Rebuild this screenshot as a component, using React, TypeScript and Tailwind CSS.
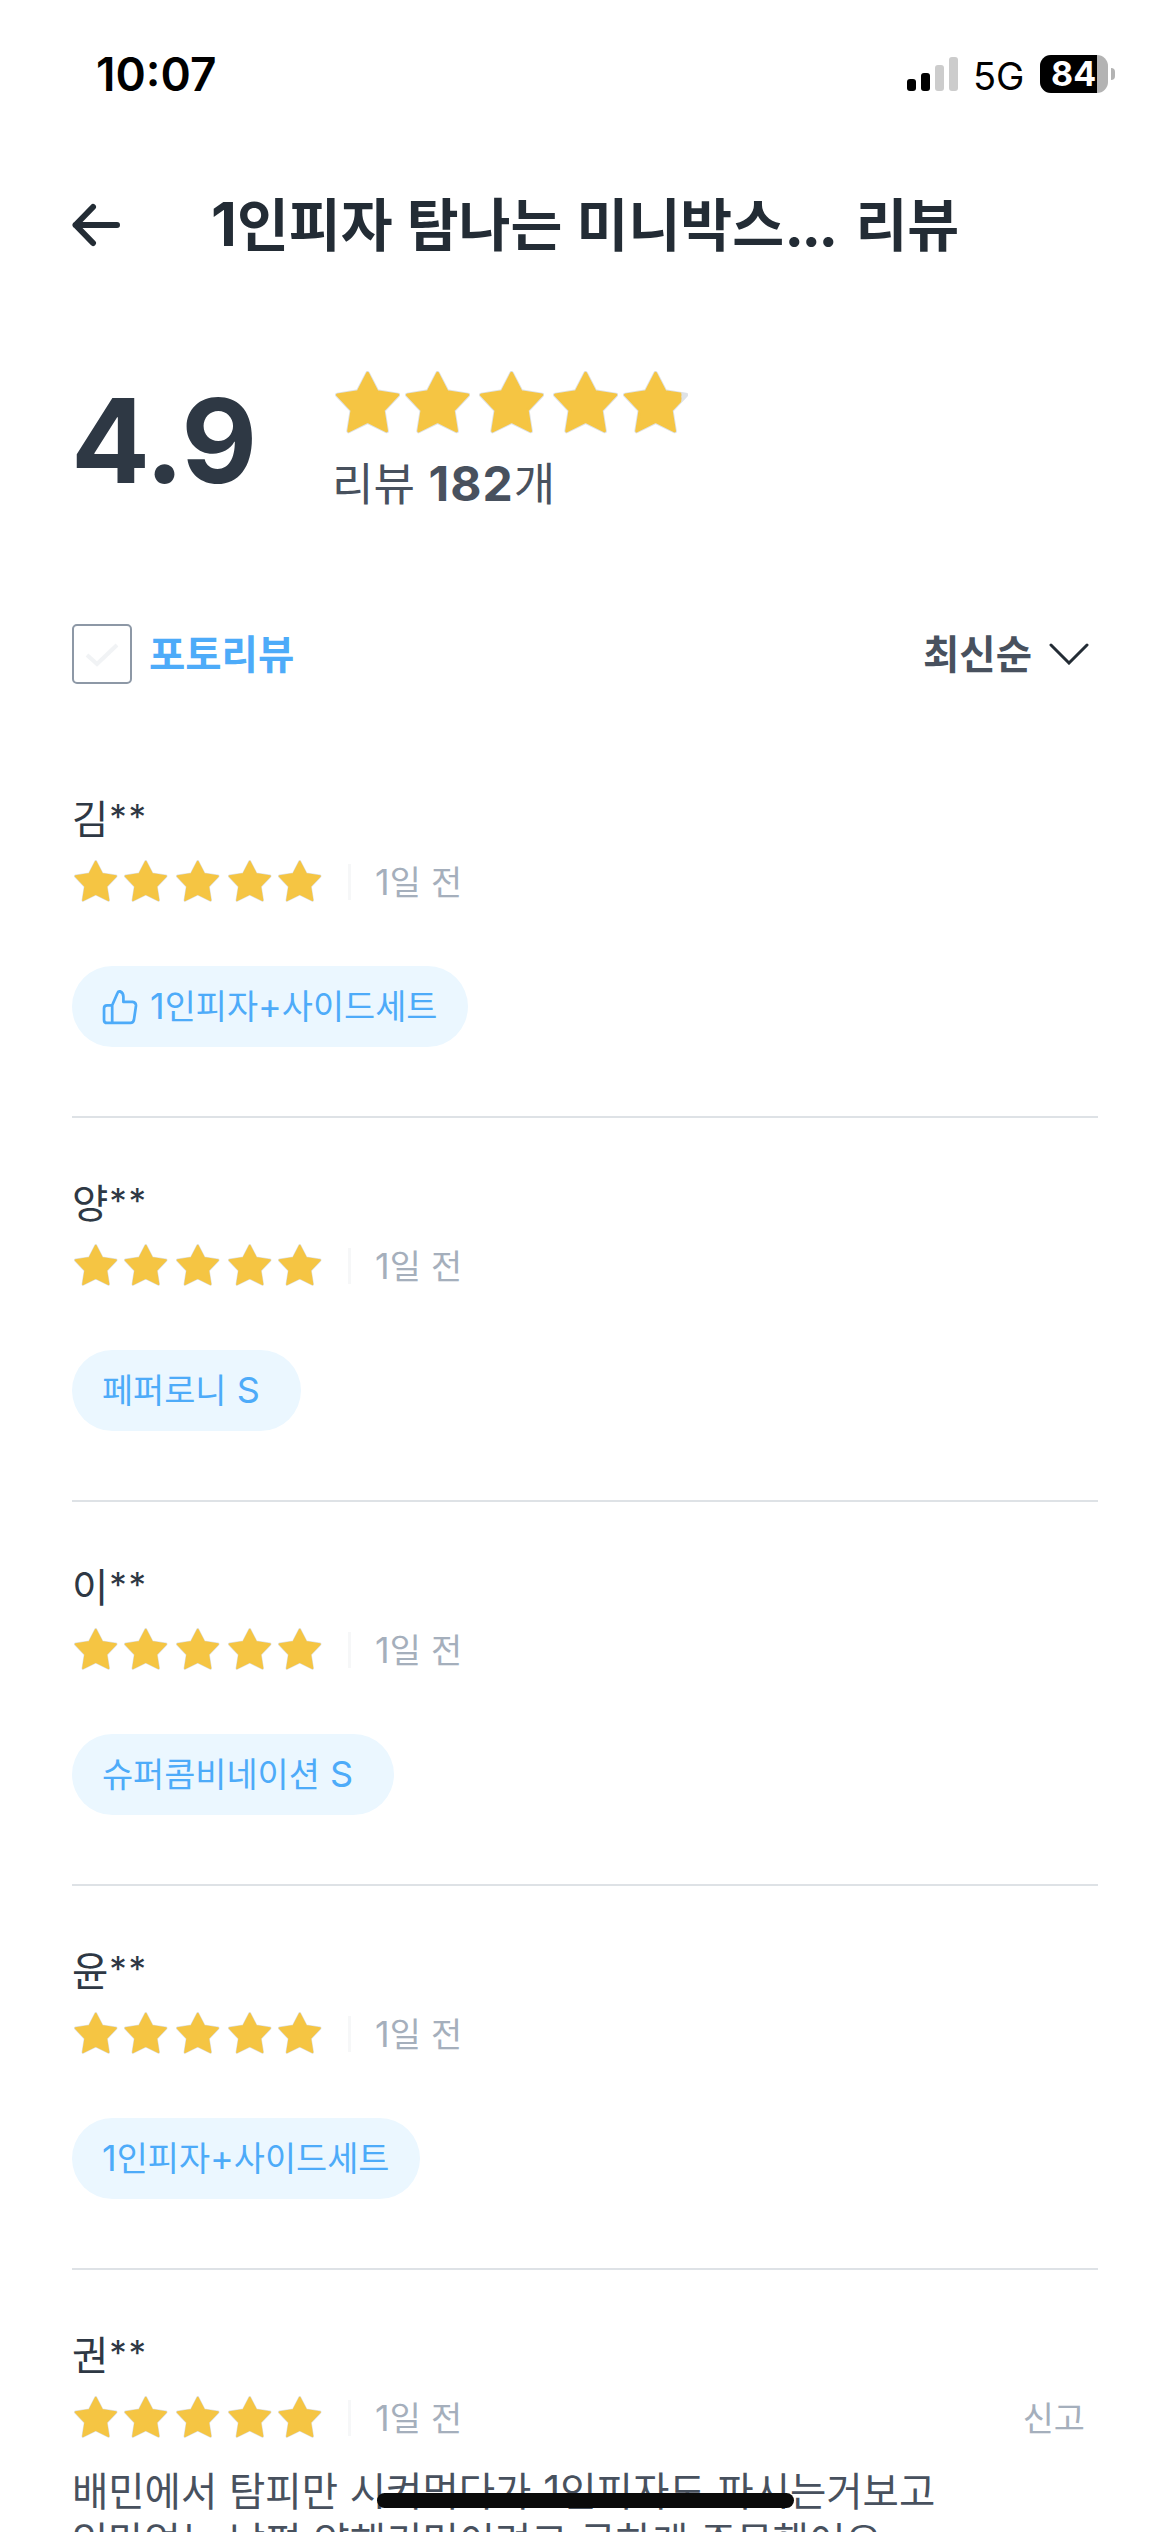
type Review = {
  name: string;
  menu?: string;
  best?: boolean;
  lines?: string[];
};

const reviews: Review[] = [
  { name: "김", menu: "1인피자+사이드세트", best: true },
  { name: "양", menu: "페퍼로니 S " },
  { name: "이", menu: "슈퍼콤비네이션 S " },
  { name: "윤", menu: "1인피자+사이드세트" },
  {
    name: "권",
    lines: [
      "배민에서 탐피만 시켜먹다가 1인피자도 파시는거보고",
      "입맛없는 남편 양해키먹이려고 급하게 주문했어요",
    ],
  },
];

// Hangul is set slightly smaller than the latin characters around it
function Ko({ children }: { children: string }) {
  return (
    <>
      {children.split(/([가-힣]+)/).map((part, i) =>
        i % 2 ? (
          <span key={i} className="text-[0.94em] leading-none">
            {part}
          </span>
        ) : (
          part
        ),
      )}
    </>
  );
}

const STAR =
  "M32.6 2.2 L42.1 20.6 L62.9 23.9 L48.3 39.4 L51.6 60 L32.6 50.6 L13.6 60 L16.9 39.4 L2.3 23.9 L23.1 20.6 Z";

function Star({ className, clip }: { className: string; clip?: boolean }) {
  return (
    <svg viewBox="0 0 65.2 62.4" className={className}>
      <path d={STAR} fill="#dee2e6" stroke="#dee2e6" strokeWidth="4.6" strokeLinejoin="round" />
      <path
        d={STAR}
        fill="#f5c543"
        stroke="#f5c543"
        strokeWidth="2.8"
        strokeLinejoin="round"
        style={clip ? { clipPath: "inset(-3px 6px -3px -3px)" } : undefined}
      />
    </svg>
  );
}

function StatusBar() {
  return (
    <div className="flex h-[148px] items-center justify-between pr-[55px] pl-[96px] text-black">
      <span className="text-[46px] leading-none font-semibold">10:07</span>
      <div className="flex items-center">
        <div className="flex h-[34px] items-end gap-[5px]">
          <i className="h-3 w-[9px] rounded-[3px] bg-black" />
          <i className="h-[18px] w-[9px] rounded-[3px] bg-black" />
          <i className="h-[26px] w-[9px] rounded-[3px] bg-[#cccccc]" />
          <i className="h-[34px] w-[9px] rounded-[3px] bg-[#cccccc]" />
        </div>
        <span className="ml-[15px] w-[51px] pt-1 text-[38px] leading-none">5G</span>
        <div className="ml-[16px] flex h-[38px] w-[68px] items-center rounded-[11px] bg-[#b3b3b3]">
          <span className="flex h-full w-[57px] items-center rounded-l-[11px] bg-black pl-[11px] text-[34px] leading-none font-bold text-white">
            84
          </span>
        </div>
        <i className="ml-[3px] h-3 w-1 rounded-r-full bg-[#b3b3b3]" />
      </div>
    </div>
  );
}

function ReviewItem({ review }: { review: Review }) {
  return (
    <article className="border-b-2 border-[#dee2e6] pt-[55px] pb-[69px]">
      <h3 className="text-[42px] leading-[60px] text-[#2e3844]">
        <Ko>{review.name}</Ko>
        <span className="relative -top-1 ml-px text-[35px] leading-none tracking-[1.6px]">**</span>
      </h3>
      <div className="mt-[11px] flex h-[42px] items-center">
        <div className="ml-[2px] grid grid-cols-[50px_52px_52px_50px_44px]">
          {[0, 1, 2, 3, 4].map((n) => (
            <Star key={n} className="h-[42px] w-[43.5px]" />
          ))}
        </div>
        <i className="mt-0.5 ml-[26px] h-9 w-[3px] bg-[#f6f7f8]" />
        <span className="ml-[24px] pt-0.5 text-[36px] leading-none text-[#a5afbc]">
          <Ko>1일 전</Ko>
        </span>
        {review.lines && (
          <button className="mr-[13px] ml-auto pt-0.5 text-[36px] leading-none text-[#a5afbc]">
            <Ko>신고</Ko>
          </button>
        )}
      </div>
      {review.lines && (
        <p className="mt-7 text-[42px] leading-[50px] whitespace-nowrap text-[#48515e]">
          {review.lines.map((line) => (
            <span key={line} className="block">
              <Ko>{line}</Ko>
            </span>
          ))}
        </p>
      )}
      {review.menu && (
        <div className="mt-16 flex h-[81px] w-fit items-center rounded-full bg-[#ebf7ff] pr-[31px] pb-0.5 pl-[30px] text-[36px] leading-none whitespace-pre text-[#4dabf9]">
          {review.best && (
            <svg
              viewBox="-3 -3 106 106"
              className="mt-0.5 mr-3 size-9"
              fill="none"
              stroke="currentColor"
              strokeWidth="8"
              strokeLinejoin="round"
            >
              <path d="M27 45 L43 8 Q45 3 50 4 Q60 8 60 20 V35 H87 Q98 36 97 47 L91 88 Q89 97 81 97 H12 Q3 97 3 88 V54 Q3 45 12 45 H27 V97" />
            </svg>
          )}
          <span>
            <Ko>{review.menu}</Ko>
          </span>
        </div>
      )}
    </article>
  );
}

export default function App() {
  return (
    <div className="relative h-[2532px] w-[1170px] overflow-hidden bg-white font-['Inter','Noto_Sans_CJK_KR',sans-serif]">
      <StatusBar />

      <header className="flex h-[154px] items-center pl-[72px] text-[#232c35]">
        <svg
          viewBox="0 0 48 44"
          className="h-[44px] w-12"
          fill="none"
          stroke="currentColor"
          strokeWidth="6"
          strokeLinecap="round"
          strokeLinejoin="round"
        >
          <path d="M45 22 H3.5 M21 4 L3.5 22 L21 40" />
        </svg>
        <h1 className="ml-[91px] pb-0.5 text-[60px] leading-none font-bold whitespace-nowrap">
          <Ko>1인피자 탐나는 미니박스</Ko>
          <span className="mr-[6px] tracking-[-3px]">...</span>{" "}
          <Ko>리뷰</Ko>
        </h1>
      </header>

      <section className="mt-[70px] flex h-[139px] items-center pl-[71px]">
        <strong className="w-[261px] pb-0.5 text-[117px] leading-none font-bold tracking-[-1.2px] text-[#2e3844]">
          4.9
        </strong>
        <div>
          <div className="ml-[3px] grid grid-cols-[70px_74px_74px_70px_66px]">
            {[0, 1, 2, 3, 4].map((n) => (
              <Star key={n} className="h-[62.4px] w-[65.2px]" clip={n === 4} />
            ))}
          </div>
          <p className="mt-[22px] text-[48px] leading-[56px] text-[#48515e]">
            <Ko>리뷰 </Ko>
            <b className="font-bold tracking-[1px]">182</b>
            <Ko>개</Ko>
          </p>
        </div>
      </section>

      <div className="mt-[113px] flex h-[60px] items-center pr-[81px] pl-[72px] text-[42px] leading-none font-bold">
        <span className="flex size-[60px] items-center justify-center rounded-[5px] border-[2.5px] border-[#8d98a6]">
          <svg viewBox="0 0 34 26" className="h-[26px] w-[34px]" fill="none" stroke="#f1f3f5" strokeWidth="4">
            <path d="M2 14 L12 23 L32 4" />
          </svg>
        </span>
        <span className="ml-[17px] text-[#4dabf9]">
          <Ko>포토리뷰</Ko>
        </span>
        <span className="ml-auto text-[#48515e]">
          <Ko>최신순</Ko>
        </span>
        <svg
          viewBox="0 0 40 22"
          className="ml-[17px] h-[22px] w-10"
          fill="none"
          stroke="#232c35"
          strokeWidth="3"
          strokeLinecap="round"
        >
          <path d="M2 2 L20 20 L38 2" />
        </svg>
      </div>

      <main className="mt-[50px] px-[72px]">
        {reviews.map((review) => (
          <ReviewItem key={review.name} review={review} />
        ))}
      </main>

      {/* Home indicator floats over the list */}
      <div className="absolute bottom-6 left-[377px] h-[15px] w-[417px] rounded-full bg-[#0a0a0a]" />
    </div>
  );
}
